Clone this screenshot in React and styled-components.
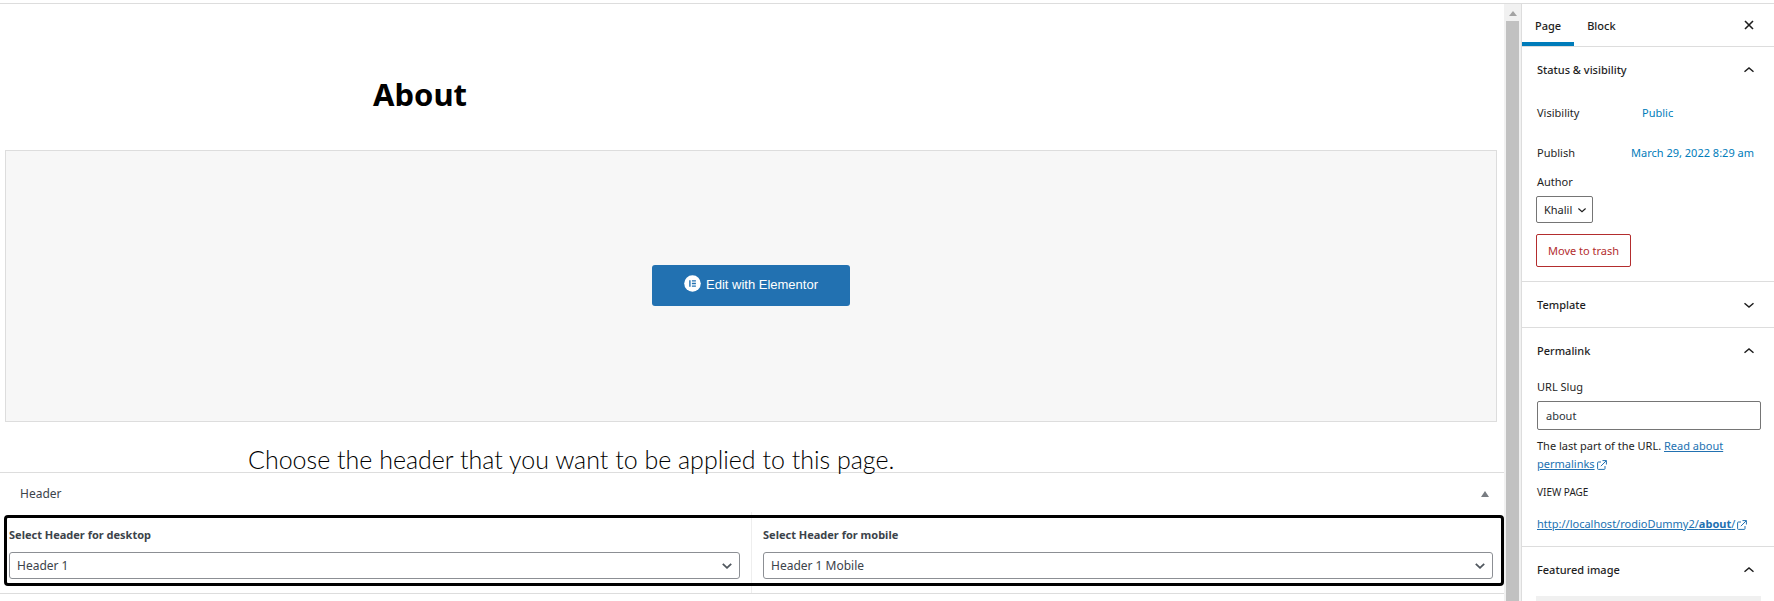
import React, { useState } from "react";
import styled, { createGlobalStyle } from 'styled-components';

const GlobalStyle = createGlobalStyle`
  * {
    box-sizing: border-box;
  }

  body {
    margin: 0;
    overflow: hidden;
    background: #fff;
    color: #1e1e1e;
    font-family: "Noto Sans", "Open Sans", sans-serif;
    font-size: 12px;
    line-height: 18px;
  }

  button, input, select {
    font: inherit;
    color: inherit;
  }
`;

const Screen = styled.div`
  display: flex;
  height: 100vh;
  border-top: 3px solid #fff;
  overflow: hidden;
`;

const Editor = styled.main`
  flex: 1;
  min-width: 0;
  border-top: 1px solid #ddd;
`;

const PageTitle = styled.h1`
  max-width: 758px;
  margin: 0 auto;
  padding: 68px 0 34px;
  color: #000;
  font-size: 31px;
  line-height: 44px;
  font-weight: 700;
`;

const Canvas = styled.section`
  display: flex;
  align-items: center;
  justify-content: center;
  height: 272px;
  margin: 0 7px 0 5px;
  padding-bottom: 2px;
  background: #f7f7f7;
  border: 1px solid #ddd;
`;

const ElementorButton = styled.button`
  display: flex;
  align-items: center;
  justify-content: center;
  gap: 5px;
  width: 198px;
  height: 41px;
  padding: 0;
  border: 0;
  border-radius: 3px;
  background: #2271b1;
  color: #fff;
  font-family: "Liberation Sans", Arial, sans-serif;
  font-size: 13px;
  cursor: pointer;

  svg {
    margin-bottom: 4px;
  }
`;

const Caption = styled.p`
  margin: 0;
  padding: 25px 0 0 248px;
  color: #000;
  font-family: Lato, sans-serif;
  font-size: 25px;
  line-height: 25px;
  font-weight: 300;
`;

const MetaBox = styled.section`
  border-top: 1px solid #ddd;
  border-bottom: 1px solid #ddd;
  color: #3c434a;
`;

const MetaHeader = styled.div`
  display: flex;
  align-items: center;
  justify-content: space-between;
  height: 39px;
  padding: 3px 15px 0 20px;
`;

const MetaHeading = styled.h2`
  margin: 0;
  font-size: 12px;
  font-weight: 400;
`;

const IconButton = styled.button`
  display: flex;
  padding: 0;
  border: 0;
  background: none;
  cursor: pointer;
`;

const MetaFields = styled.div`
  position: relative;
  display: grid;
  grid-template-columns: 1fr 1fr;

  &::after {
    content: "";
    position: absolute;
    inset: 3px 0 7px 4px;
    border: 3px solid #000;
    border-radius: 4px;
    pointer-events: none;
  }
`;

const MetaField = styled.div`
  display: flex;
  flex-direction: column;
  gap: 8px;
  padding: 14px 11px;

  &:first-child {
    padding-left: 9px;
    border-right: 1px solid #eee;
  }
`;

const MetaLabel = styled.label`
  font-size: 11px;
  font-weight: 700;
`;

const SelectWrap = styled.div`
  position: relative;
  width: ${props => props.$compact ? '57px' : '100%'};

  svg {
    position: absolute;
    top: 50%;
    right: ${props => props.$compact ? '7px' : '8px'};
    transform: translateY(-50%);
    pointer-events: none;
  }
`;

const Select = styled.select`
  display: block;
  width: 100%;
  height: 27px;
  padding: 0 7px;
  appearance: none;
  background: #fff;
  border: 1px solid ${props => props.$border || '#8c8f94'};
  border-radius: ${props => props.$border ? '2px' : '3px'};
`;

const Scrollbar = styled.div`
  display: flex;
  flex-direction: column;
  align-items: center;
  width: 17px;
  background: #f1f1f1;
  border-top: 1px solid #ddd;

  svg {
    flex: none;
    margin: 7px 0 5px;
  }
`;

const Thumb = styled.div`
  flex: 1;
  width: 13px;
  background: #c1c1c1;
`;

const Sidebar = styled.aside`
  width: 253px;
  border-top: 1px solid #ddd;
  border-left: 1px solid #ddd;
  font-size: 11px;
`;

const Tabs = styled.div`
  display: flex;
  align-items: stretch;
  height: 43px;
  border-bottom: 1px solid #ddd;
`;

const Tab = styled.button`
  height: 42px;
  padding: 5px 13px 0;
  border: 0;
  border-bottom: 4px solid ${props => props.$active ? '#007cba' : 'transparent'};
  background: none;
  font-weight: 500;
  cursor: pointer;
`;

const CloseButton = styled(IconButton)`
  align-items: center;
  margin-left: auto;
  padding-right: 20px;
`;

const Section = styled.section`
  padding: 0 13px 0 14px;
  border-bottom: 1px solid #ddd;
`;

const SectionHeading = styled.h2`
  margin: 0;
  font-size: 11px;
  font-weight: 500;
`;

const SectionToggle = styled.button`
  display: flex;
  align-items: center;
  justify-content: space-between;
  width: 100%;
  height: 45px;
  padding: 1px 7px 0 1px;
  border: 0;
  background: none;
  text-align: left;
  cursor: pointer;
`;

const StatusBody = styled.div`
  padding: 1px 0 14px;
`;

const Row = styled.div`
  display: flex;
  align-items: center;
  height: 40px;
  padding: 0 7px 0 1px;
`;

const RowName = styled.span`
  flex: 1;
`;

const RowButton = styled.button`
  width: ${props => props.$wide ? 'auto' : '112px'};
  padding: 0;
  border: 0;
  background: none;
  color: #007cba;
  text-align: left;
  white-space: nowrap;
  cursor: pointer;
`;

const FieldLabel = styled.label`
  display: block;
  padding-bottom: 5px;
`;

const AuthorField = styled.div`
  > label {
    padding-left: 1px;
  }
`;

const TrashButton = styled.button`
  display: block;
  height: 33px;
  margin-top: 11px;
  padding: 0 11px;
  border: 1px solid #b32d2e;
  border-radius: 2px;
  background: #fff;
  color: #b32d2e;
  cursor: pointer;
`;

const PermalinkBody = styled.div`
  padding: 5px 0 13px 1px;
`;

const TextInput = styled.input`
  display: block;
  width: 100%;
  height: 29px;
  padding: 0 8px;
  border: 1px solid #757575;
  border-radius: 2px;
  color: #2c3338;
`;

const Help = styled.p`
  margin: 7px 0 10px;
`;

const SubHeading = styled.h3`
  margin: 0 0 14px;
  font-size: 10px;
  font-weight: 400;
  text-transform: uppercase;
`;

const Link = styled.a`
  color: #2271b1;
  white-space: ${props => props.$nowrap ? 'nowrap' : 'normal'};

  svg {
    margin-left: 2px;
    vertical-align: -2px;
  }
`;

const ImageSlot = styled.button`
  display: block;
  width: 100%;
  height: 80px;
  margin-top: 4px;
  border: 0;
  background: #f0f0f0;
  cursor: pointer;
`;

const Chevron = ({up, size = 10}) => (
    <svg width={size} height="6" viewBox="0 0 10 6" fill="none" stroke="#1e1e1e" strokeWidth="1.5" aria-hidden="true">
        <path d={up ? 'M0.5 4.8 5 1 9.5 4.8' : 'M0.5 1.2 5 5 9.5 1.2'}/>
    </svg>
);

const SelectArrow = () => (
    <svg width="10" height="6" viewBox="0 0 10 6" fill="none" stroke="#50575e" strokeWidth="1.8" aria-hidden="true">
        <path d="M0.8 0.8 5 4.8 9.2 0.8"/>
    </svg>
);

const Triangle = ({width, height, color}) => (
    <svg width={width} height={height} viewBox="0 0 8 6" preserveAspectRatio="none" aria-hidden="true">
        <path d="M4 0 8 6H0Z" fill={color}/>
    </svg>
);

const ElementorIcon = () => (
    <svg width="17" height="17" viewBox="0 0 17 17" aria-hidden="true">
        <circle cx="8.5" cy="8.5" r="8.3" fill="#fff"/>
        <path d="M5.2 5.2h1.4v6.6H5.2zM7.9 5.2h4v1.4h-4zM7.9 7.8h4v1.4h-4zM7.9 10.4h4v1.4h-4z" fill="#2271b1"/>
    </svg>
);

const ExternalIcon = () => (
    <svg width="10" height="10" viewBox="0 0 10 10" fill="none" stroke="#2271b1" aria-hidden="true">
        <path d="M4 2H1.3Q.6 2 .6 2.7V8.7Q.6 9.4 1.3 9.4H7.3Q8 9.4 8 8.7V6M5.5.6H9.4V4.5M9.3.7 3.8 6.2"/>
    </svg>
);

const CloseIcon = () => (
    <svg width="10" height="10" viewBox="0 0 10 10" stroke="#1e1e1e" strokeWidth="1.6" aria-hidden="true">
        <path d="M1 1 9 9M9 1 1 9"/>
    </svg>
);

const Panel = ({title, open, children}) => {
    const [expanded, setExpanded] = useState(open);

    return (
        <Section>
            <SectionHeading>
                <SectionToggle type="button" aria-expanded={expanded} onClick={() => setExpanded(!expanded)}>
                    {title}
                    <Chevron up={expanded}/>
                </SectionToggle>
            </SectionHeading>
            {expanded && children}
        </Section>
    );
}

const HeaderSelect = ({id, label, options}) => (
    <MetaField>
        <MetaLabel htmlFor={id}>{label}</MetaLabel>
        <SelectWrap>
            <Select id={id}>
                {options.map(option => <option key={option}>{option}</option>)}
            </Select>
            <SelectArrow/>
        </SelectWrap>
    </MetaField>
);

const App = () => {
    const [tab, setTab] = useState('Page');
    const [slug, setSlug] = useState('about');

    return (
        <Screen>
            <GlobalStyle/>
            <Editor>
                <PageTitle>About</PageTitle>
                <Canvas>
                    <ElementorButton type="button">
                        <ElementorIcon/>
                        Edit with Elementor
                    </ElementorButton>
                </Canvas>
                <Caption>Choose the header that you want to be applied to this page.</Caption>
                <MetaBox>
                    <MetaHeader>
                        <MetaHeading>Header</MetaHeading>
                        <IconButton type="button" aria-label="Toggle panel: Header">
                            <Triangle width={8} height={6} color="#787c82"/>
                        </IconButton>
                    </MetaHeader>
                    <MetaFields>
                        <HeaderSelect id="desktop-header" label="Select Header for desktop" options={['Header 1']}/>
                        <HeaderSelect id="mobile-header" label="Select Header for mobile" options={['Header 1 Mobile']}/>
                    </MetaFields>
                </MetaBox>
            </Editor>
            <Scrollbar>
                <Triangle width={8} height={5} color="#a3a3a3"/>
                <Thumb/>
            </Scrollbar>
            <Sidebar>
                <Tabs>
                    {['Page', 'Block'].map(name => (
                        <Tab key={name} type="button" $active={tab === name} onClick={() => setTab(name)}>{name}</Tab>
                    ))}
                    <CloseButton type="button" aria-label="Close settings"><CloseIcon/></CloseButton>
                </Tabs>
                <Panel title="Status & visibility" open>
                    <StatusBody>
                        <Row>
                            <RowName>Visibility</RowName>
                            <RowButton type="button">Public</RowButton>
                        </Row>
                        <Row>
                            <RowName>Publish</RowName>
                            <RowButton type="button" $wide>March 29, 2022 8:29 am</RowButton>
                        </Row>
                        <AuthorField>
                            <FieldLabel htmlFor="author">Author</FieldLabel>
                            <SelectWrap $compact>
                                <Select id="author" $border="#757575">
                                    <option>Khalil</option>
                                </Select>
                                <Chevron size={8}/>
                            </SelectWrap>
                        </AuthorField>
                        <TrashButton type="button">Move to trash</TrashButton>
                    </StatusBody>
                </Panel>
                <Panel title="Template" open={false}/>
                <Panel title="Permalink" open>
                    <PermalinkBody>
                        <FieldLabel htmlFor="slug">URL Slug</FieldLabel>
                        <TextInput id="slug" type="text" value={slug} onChange={event => setSlug(event.target.value)}/>
                        <Help>
                            The last part of the URL. <Link href="#permalinks">Read about permalinks<ExternalIcon/></Link>
                        </Help>
                        <SubHeading>View page</SubHeading>
                        <Link href="#about" $nowrap>http://localhost/rodioDummy2/<b>about</b>/<ExternalIcon/></Link>
                    </PermalinkBody>
                </Panel>
                <Panel title="Featured image" open>
                    <ImageSlot type="button" aria-label="Set featured image"/>
                </Panel>
            </Sidebar>
        </Screen>
    );
}

export default App;
